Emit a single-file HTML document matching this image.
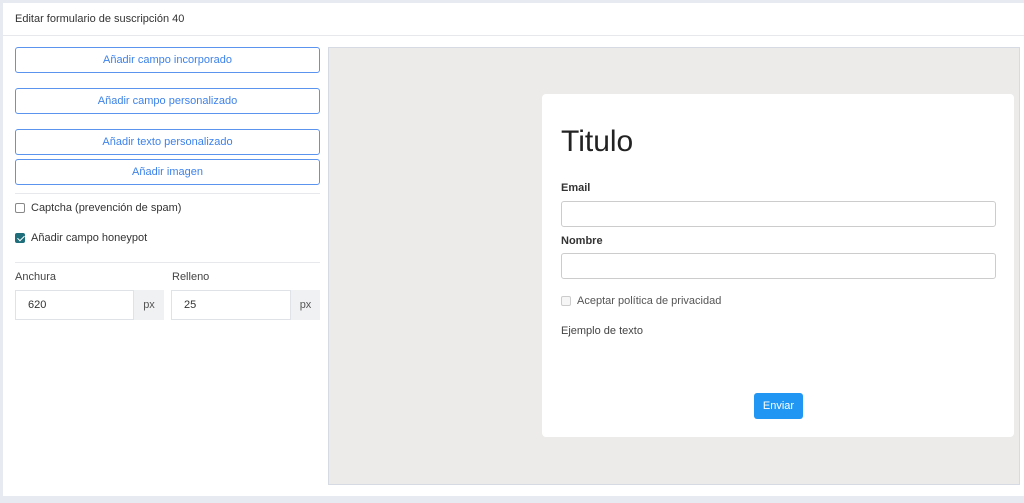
<!DOCTYPE html>
<html><head><meta charset="utf-8"><style>
*{box-sizing:border-box;margin:0;padding:0}
body{width:1024px;height:503px;background:#e8eaf1;font-family:"Liberation Sans",sans-serif;position:relative;overflow:hidden;color:#333}
.card{position:absolute;left:3px;top:3px;width:1021px;height:493px;background:#fff}
.hdr{position:absolute;left:0;top:0;width:100%;height:33px;border-bottom:1px solid #e6e8ec;font-size:11px;color:#333;padding:10px 0 0 12px}
.btn{position:absolute;left:12px;width:305px;height:26px;border:1px solid #5a94ee;border-radius:3px;color:#3d82ea;font-size:11px;text-align:center;line-height:25px}
.hr{position:absolute;left:12px;width:305px;border-top:1px solid #e6e8ec}
.chk{position:absolute;left:12px;font-size:11px;color:#333;display:flex;align-items:center}
.box{width:10px;height:10px;border:1px solid #888;border-radius:2px;margin-right:6px;background:#fff}
.box.on{background:#1e6e7c;border-color:#1e6e7c;position:relative}
.box.on:after{content:"";position:absolute;left:2.5px;top:0px;width:3px;height:6px;border:solid #fff;border-width:0 1.5px 1.5px 0;transform:rotate(45deg)}
.lbl{position:absolute;font-size:11px;color:#444}
.inp{position:absolute;height:30px;border:1px solid #dfe2e6;font-size:11px;color:#333;padding:8px 0 0 12px}
.px{position:absolute;height:30px;background:#f0f1f3;font-size:11px;color:#555;text-align:center;line-height:30px}
.prev{position:absolute;left:325px;top:44px;width:692px;height:438px;background:#ecebe9;border:1px solid #d5dae3}
.form{position:absolute;left:213px;top:46px;width:472px;height:343px;background:#fff;border-radius:4px}
.form h1{position:absolute;left:19px;top:31px;font-weight:normal;font-size:30px;color:#222}
.fl{position:absolute;left:19px;font-size:11px;font-weight:bold;color:#333}
.fi{position:absolute;left:19px;width:435px;height:26px;border:1px solid #ccc;border-radius:3px}
.send{position:absolute;left:212px;top:299px;width:49px;height:26px;background:#2196f3;border-radius:3px;color:#fff;font-size:11px;text-align:center;line-height:26px}
</style></head><body>
<div class="card">
<div class="hdr">Editar formulario de suscripción 40</div>
<div class="btn" style="top:44px">Añadir campo incorporado</div>
<div class="btn" style="top:85px">Añadir campo personalizado</div>
<div class="btn" style="top:126px">Añadir texto personalizado</div>
<div class="btn" style="top:156px">Añadir imagen</div>
<div class="hr" style="top:190px"></div>
<div class="chk" style="top:199px"><div class="box"></div>Captcha (prevención de spam)</div>
<div class="chk" style="top:229px"><div class="box on"></div>Añadir campo honeypot</div>
<div class="hr" style="top:259px"></div>
<div class="lbl" style="left:12px;top:268px">Anchura</div>
<div class="lbl" style="left:169px;top:268px">Relleno</div>
<div class="inp" style="left:12px;top:287px;width:119px">620</div>
<div class="px" style="left:131px;top:287px;width:30px">px</div>
<div class="inp" style="left:168px;top:287px;width:120px">25</div>
<div class="px" style="left:288px;top:287px;width:29px">px</div>
<div class="prev">
<div class="form">
<h1>Titulo</h1>
<div class="fl" style="top:88px">Email</div>
<div class="fi" style="top:107px"></div>
<div class="fl" style="top:141px">Nombre</div>
<div class="fi" style="top:159px"></div>
<div style="position:absolute;left:19px;top:201px;font-size:11px;color:#555;display:flex;align-items:center"><div style="width:10px;height:10px;border:1px solid #ccc;border-radius:2px;margin-right:6px;background:#f6f6f6"></div>Aceptar política de privacidad</div>
<div style="position:absolute;left:19px;top:231px;font-size:11px;color:#444">Ejemplo de texto</div>
<div class="send">Enviar</div>
</div>
</div>
</div>
</body></html>
